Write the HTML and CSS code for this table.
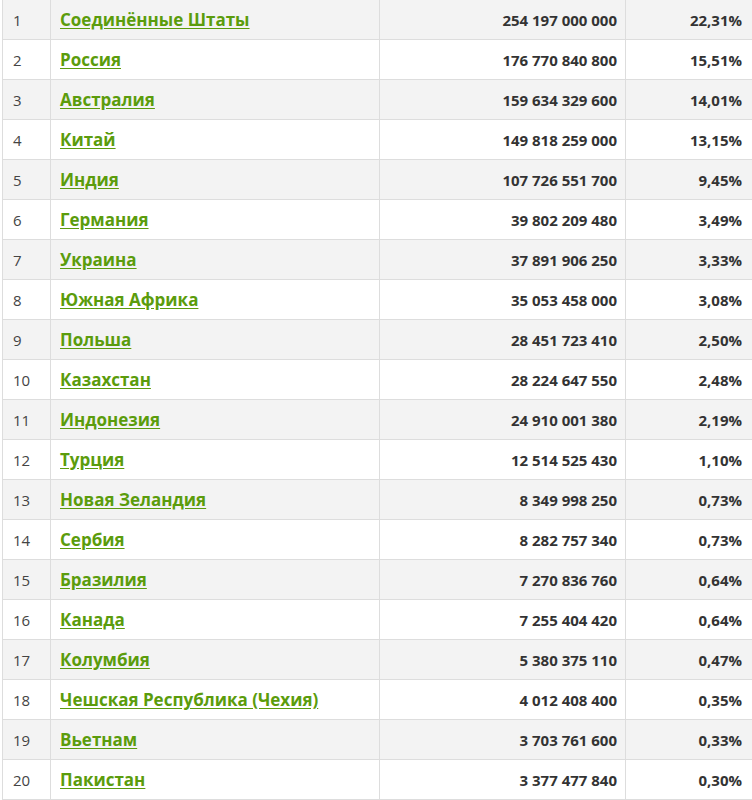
FILE: index.html
```html
<!DOCTYPE html>
<html lang="ru">
<head>
<meta charset="utf-8">
<link rel="stylesheet" href="styles.css">
</head>
<body>
<div class="wrap">
<table class="rank-table">
<colgroup><col class="c1"><col class="c2"><col class="c3"><col class="c4"></colgroup>
<tbody>
<tr><td class="n">1</td><td class="name"><a href="#">Соединённые Штаты</a></td><td class="v">254 197 000 000</td><td class="v p">22,31%</td></tr>
<tr><td class="n">2</td><td class="name"><a href="#">Россия</a></td><td class="v">176 770 840 800</td><td class="v p">15,51%</td></tr>
<tr><td class="n">3</td><td class="name"><a href="#">Австралия</a></td><td class="v">159 634 329 600</td><td class="v p">14,01%</td></tr>
<tr><td class="n">4</td><td class="name"><a href="#">Китай</a></td><td class="v">149 818 259 000</td><td class="v p">13,15%</td></tr>
<tr><td class="n">5</td><td class="name"><a href="#">Индия</a></td><td class="v">107 726 551 700</td><td class="v p">9,45%</td></tr>
<tr><td class="n">6</td><td class="name"><a href="#">Германия</a></td><td class="v">39 802 209 480</td><td class="v p">3,49%</td></tr>
<tr><td class="n">7</td><td class="name"><a href="#">Украина</a></td><td class="v">37 891 906 250</td><td class="v p">3,33%</td></tr>
<tr><td class="n">8</td><td class="name"><a href="#">Южная Африка</a></td><td class="v">35 053 458 000</td><td class="v p">3,08%</td></tr>
<tr><td class="n">9</td><td class="name"><a href="#">Польша</a></td><td class="v">28 451 723 410</td><td class="v p">2,50%</td></tr>
<tr><td class="n">10</td><td class="name"><a href="#">Казахстан</a></td><td class="v">28 224 647 550</td><td class="v p">2,48%</td></tr>
<tr><td class="n">11</td><td class="name"><a href="#">Индонезия</a></td><td class="v">24 910 001 380</td><td class="v p">2,19%</td></tr>
<tr><td class="n">12</td><td class="name"><a href="#">Турция</a></td><td class="v">12 514 525 430</td><td class="v p">1,10%</td></tr>
<tr><td class="n">13</td><td class="name"><a href="#">Новая Зеландия</a></td><td class="v">8 349 998 250</td><td class="v p">0,73%</td></tr>
<tr><td class="n">14</td><td class="name"><a href="#">Сербия</a></td><td class="v">8 282 757 340</td><td class="v p">0,73%</td></tr>
<tr><td class="n">15</td><td class="name"><a href="#">Бразилия</a></td><td class="v">7 270 836 760</td><td class="v p">0,64%</td></tr>
<tr><td class="n">16</td><td class="name"><a href="#">Канада</a></td><td class="v">7 255 404 420</td><td class="v p">0,64%</td></tr>
<tr><td class="n">17</td><td class="name"><a href="#">Колумбия</a></td><td class="v">5 380 375 110</td><td class="v p">0,47%</td></tr>
<tr><td class="n">18</td><td class="name"><a href="#">Чешская Республика (Чехия)</a></td><td class="v">4 012 408 400</td><td class="v p">0,35%</td></tr>
<tr><td class="n">19</td><td class="name"><a href="#">Вьетнам</a></td><td class="v">3 703 761 600</td><td class="v p">0,33%</td></tr>
<tr><td class="n">20</td><td class="name"><a href="#">Пакистан</a></td><td class="v">3 377 477 840</td><td class="v p">0,30%</td></tr>
</tbody>
</table>
</div>
</body>
</html>
```
FILE: styles.css
```css
html, body {
  margin: 0;
  padding: 0;
  background: #ffffff;
}
.wrap {
  padding-left: 2px;
  margin-top: -1px;
  width: 750px;
}
.rank-table {
  width: 750px;
  border-collapse: collapse;
  table-layout: fixed;
  font-family: "Open Sans", "Noto Sans", sans-serif;
  font-size: 15px;
  color: #333333;
}
.c1 { width: 48px; }
.c2 { width: 329px; }
.c3 { width: 246px; }
.c4 { width: 127px; }
.rank-table td {
  border: 1px solid #dddddd;
  height: 40px;
  padding: 0 8px 0 9px;
  box-sizing: border-box;
  vertical-align: middle;
  white-space: nowrap;
}
.rank-table tr:nth-child(odd) td {
  background: #f3f3f3;
}
.rank-table td.n {
  padding-left: 10px;
  color: #444444;
}
.rank-table td.name a {
  color: #5b9c0c;
  font-weight: 700;
  font-size: 17px;
  text-decoration: underline;
  text-underline-offset: 2px;
}
.rank-table td.v {
  text-align: right;
  font-weight: 700;
  color: #333333;
}
.rank-table td.p {
  padding-right: 10px;
}
```
